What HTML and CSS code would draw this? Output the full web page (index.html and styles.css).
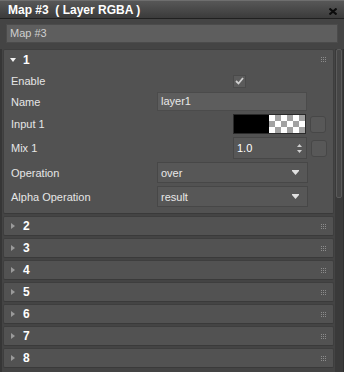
FILE: index.html
```html
<!DOCTYPE html>
<html lang="en">
<head>
    <meta charset="UTF-8">
    <meta name="viewport" content="width=device-width, initial-scale=1.0">
    <title>Map #3 (Layer RGBA)</title>
    <link rel="stylesheet" href="styles.css">
</head>
<body>

    <!-- Title bar -->
    <div class="titlebar">
        <span class="title">Map #3 &nbsp;( Layer RGBA )</span>
        <svg class="close" width="8" height="7" viewBox="0 0 8 7"><path d="M0.5,0.5 L7.5,6.5 M7.5,0.5 L0.5,6.5" stroke="#0c0c0c" stroke-width="2"/></svg>
    </div>

    <!-- Map name -->
    <div class="namebar">
        <div class="field">Map #3</div>
    </div>

    <div class="panel">
        <div class="rollouts">

            <!-- Layer 1, expanded -->
            <div class="rollout">
                <div class="rollout-head">
                    <svg class="tri" width="6" height="4" viewBox="0 0 6 4"><polygon points="0,0 6,0 3,4" fill="#f2f2f2"/></svg>
                    <span class="num">1</span>
                    <svg class="grip" width="5" height="5" viewBox="0 0 5 5" fill="#8c8c8c"><rect x="0" y="0" width="1" height="1"/><rect x="2" y="0" width="1" height="1"/><rect x="4" y="0" width="1" height="1"/><rect x="0" y="2" width="1" height="1"/><rect x="2" y="2" width="1" height="1"/><rect x="4" y="2" width="1" height="1"/><rect x="0" y="4" width="1" height="1"/><rect x="2" y="4" width="1" height="1"/><rect x="4" y="4" width="1" height="1"/></svg>
                </div>

                <div class="row row-enable">
                    <span class="label">Enable</span>
                    <span class="check offset">
                        <svg width="9" height="8" viewBox="0 0 9 8"><polyline points="1,4 3.5,6.5 8,1" fill="none" stroke="#cfcfcf" stroke-width="1.8"/></svg>
                    </span>
                </div>

                <div class="row row-name">
                    <span class="label">Name</span>
                    <div class="field name-field">layer1</div>
                </div>

                <div class="row row-input">
                    <span class="label">Input 1</span>
                    <div class="swatch offset">
                        <span class="swatch-black"></span>
                        <span class="swatch-checker"></span>
                    </div>
                    <span class="mini-btn"></span>
                </div>

                <div class="row row-mix">
                    <span class="label">Mix 1</span>
                    <div class="spinner offset">
                        <span>1.0</span>
                        <svg width="5" height="9" viewBox="0 0 5 9"><polygon points="2.5,0 5,3 0,3" fill="#cfcfcf"/><polygon points="0,6 5,6 2.5,9" fill="#cfcfcf"/></svg>
                    </div>
                    <span class="mini-btn"></span>
                </div>

                <div class="row row-drop">
                    <span class="label">Operation</span>
                    <div class="dropdown">
                        <span>over</span>
                        <svg width="7" height="5" viewBox="0 0 7 5"><rect x="0" y="0" width="7" height="1" fill="#e0e0e0"/><polygon points="0,1 7,1 3.5,5" fill="#e0e0e0"/></svg>
                    </div>
                </div>

                <div class="row row-drop">
                    <span class="label">Alpha Operation</span>
                    <div class="dropdown">
                        <span>result</span>
                        <svg width="7" height="5" viewBox="0 0 7 5"><rect x="0" y="0" width="7" height="1" fill="#e0e0e0"/><polygon points="0,1 7,1 3.5,5" fill="#e0e0e0"/></svg>
                    </div>
                </div>
            </div>

            <!-- Layers 2-8, collapsed -->
            <div class="rollout closed">
                <div class="rollout-head">
                    <svg class="tri" width="6" height="6" viewBox="0 0 4 6"><polygon points="0,0 4,3 0,6" fill="#9a9a9a"/></svg>
                    <span class="num">2</span>
                    <svg class="grip" width="5" height="5" viewBox="0 0 5 5" fill="#8c8c8c"><rect x="0" y="0" width="1" height="1"/><rect x="2" y="0" width="1" height="1"/><rect x="4" y="0" width="1" height="1"/><rect x="0" y="2" width="1" height="1"/><rect x="2" y="2" width="1" height="1"/><rect x="4" y="2" width="1" height="1"/><rect x="0" y="4" width="1" height="1"/><rect x="2" y="4" width="1" height="1"/><rect x="4" y="4" width="1" height="1"/></svg>
                </div>
            </div>
            <div class="rollout closed">
                <div class="rollout-head">
                    <svg class="tri" width="6" height="6" viewBox="0 0 4 6"><polygon points="0,0 4,3 0,6" fill="#9a9a9a"/></svg>
                    <span class="num">3</span>
                    <svg class="grip" width="5" height="5" viewBox="0 0 5 5" fill="#8c8c8c"><rect x="0" y="0" width="1" height="1"/><rect x="2" y="0" width="1" height="1"/><rect x="4" y="0" width="1" height="1"/><rect x="0" y="2" width="1" height="1"/><rect x="2" y="2" width="1" height="1"/><rect x="4" y="2" width="1" height="1"/><rect x="0" y="4" width="1" height="1"/><rect x="2" y="4" width="1" height="1"/><rect x="4" y="4" width="1" height="1"/></svg>
                </div>
            </div>
            <div class="rollout closed">
                <div class="rollout-head">
                    <svg class="tri" width="6" height="6" viewBox="0 0 4 6"><polygon points="0,0 4,3 0,6" fill="#9a9a9a"/></svg>
                    <span class="num">4</span>
                    <svg class="grip" width="5" height="5" viewBox="0 0 5 5" fill="#8c8c8c"><rect x="0" y="0" width="1" height="1"/><rect x="2" y="0" width="1" height="1"/><rect x="4" y="0" width="1" height="1"/><rect x="0" y="2" width="1" height="1"/><rect x="2" y="2" width="1" height="1"/><rect x="4" y="2" width="1" height="1"/><rect x="0" y="4" width="1" height="1"/><rect x="2" y="4" width="1" height="1"/><rect x="4" y="4" width="1" height="1"/></svg>
                </div>
            </div>
            <div class="rollout closed">
                <div class="rollout-head">
                    <svg class="tri" width="6" height="6" viewBox="0 0 4 6"><polygon points="0,0 4,3 0,6" fill="#9a9a9a"/></svg>
                    <span class="num">5</span>
                    <svg class="grip" width="5" height="5" viewBox="0 0 5 5" fill="#8c8c8c"><rect x="0" y="0" width="1" height="1"/><rect x="2" y="0" width="1" height="1"/><rect x="4" y="0" width="1" height="1"/><rect x="0" y="2" width="1" height="1"/><rect x="2" y="2" width="1" height="1"/><rect x="4" y="2" width="1" height="1"/><rect x="0" y="4" width="1" height="1"/><rect x="2" y="4" width="1" height="1"/><rect x="4" y="4" width="1" height="1"/></svg>
                </div>
            </div>
            <div class="rollout closed">
                <div class="rollout-head">
                    <svg class="tri" width="6" height="6" viewBox="0 0 4 6"><polygon points="0,0 4,3 0,6" fill="#9a9a9a"/></svg>
                    <span class="num">6</span>
                    <svg class="grip" width="5" height="5" viewBox="0 0 5 5" fill="#8c8c8c"><rect x="0" y="0" width="1" height="1"/><rect x="2" y="0" width="1" height="1"/><rect x="4" y="0" width="1" height="1"/><rect x="0" y="2" width="1" height="1"/><rect x="2" y="2" width="1" height="1"/><rect x="4" y="2" width="1" height="1"/><rect x="0" y="4" width="1" height="1"/><rect x="2" y="4" width="1" height="1"/><rect x="4" y="4" width="1" height="1"/></svg>
                </div>
            </div>
            <div class="rollout closed">
                <div class="rollout-head">
                    <svg class="tri" width="6" height="6" viewBox="0 0 4 6"><polygon points="0,0 4,3 0,6" fill="#9a9a9a"/></svg>
                    <span class="num">7</span>
                    <svg class="grip" width="5" height="5" viewBox="0 0 5 5" fill="#8c8c8c"><rect x="0" y="0" width="1" height="1"/><rect x="2" y="0" width="1" height="1"/><rect x="4" y="0" width="1" height="1"/><rect x="0" y="2" width="1" height="1"/><rect x="2" y="2" width="1" height="1"/><rect x="4" y="2" width="1" height="1"/><rect x="0" y="4" width="1" height="1"/><rect x="2" y="4" width="1" height="1"/><rect x="4" y="4" width="1" height="1"/></svg>
                </div>
            </div>
            <div class="rollout closed">
                <div class="rollout-head">
                    <svg class="tri" width="6" height="6" viewBox="0 0 4 6"><polygon points="0,0 4,3 0,6" fill="#9a9a9a"/></svg>
                    <span class="num">8</span>
                    <svg class="grip" width="5" height="5" viewBox="0 0 5 5" fill="#8c8c8c"><rect x="0" y="0" width="1" height="1"/><rect x="2" y="0" width="1" height="1"/><rect x="4" y="0" width="1" height="1"/><rect x="0" y="2" width="1" height="1"/><rect x="2" y="2" width="1" height="1"/><rect x="4" y="2" width="1" height="1"/><rect x="0" y="4" width="1" height="1"/><rect x="2" y="4" width="1" height="1"/><rect x="4" y="4" width="1" height="1"/></svg>
                </div>
            </div>
        </div>

        <!-- Scrollbar -->
        <div class="scroll">
            <div class="thumb"></div>
        </div>
    </div>

</body>
</html>
```

FILE: styles.css
```css
body {
    margin: 0;
    width: 344px;
    height: 372px;
    overflow: hidden;
    background-color: #444444;
    font-family: "Liberation Sans", Arial, sans-serif;
    font-size: 11px;
    color: #e4e4e4;
}

/* Title bar */
.titlebar {
    height: 17px;
    border-top: 1px solid #6e6e6e;
    border-bottom: 1px solid #202020;
    background: linear-gradient(#575757, #3b3b3b);
    display: flex;
    align-items: center;
    justify-content: space-between;
    padding: 0 7px 0 8px;
}
.title {
    font-size: 12px;
    font-weight: bold;
    color: #ffffff;
}
.close {
    margin-top: 4px;
}

/* Name bar */
.namebar {
    padding: 5px 6px 6px 6px;
}
.field {
    height: 17px;
    line-height: 17px;
    padding: 0 3px;
    background-color: #5e5e5e;
    border: 1px solid #4b4b4b;
    color: #cfcfcf;
}

/* Panel with rollouts and scrollbar */
.panel {
    display: flex;
    height: 323px;
    border-left: 2px solid #363636;
}
.rollouts {
    width: 331px;
    margin-left: 1px;
    display: flex;
    flex-direction: column;
    gap: 2px;
}
.rollout {
    background-color: #525252;
    border: 1px solid #3e3e3e;
    border-bottom-color: #3a3a3a;
    border-radius: 2px;
    padding-bottom: 6px;
}
.rollout.closed {
    padding-bottom: 0;
}
.rollout-head {
    height: 19px;
    display: flex;
    align-items: center;
    padding: 0 7px 0 6px;
}
.rollout.closed .rollout-head {
    height: 18px;
}
.tri {
    width: 6px;
    margin-right: 7px;
}
.num {
    font-size: 12px;
    font-weight: bold;
    color: #ffffff;
    flex: 1;
}

/* Parameter rows */
.row {
    display: flex;
    align-items: center;
    margin-top: 3px;
    padding-left: 7px;
}
.label {
    width: 146px;
    flex: none;
    color: #e6e6e6;
}
.offset {
    margin-left: 76px;
}
.row-enable {
    height: 18px;
}
.row-name {
    height: 19px;
    margin-top: 2px;
}
.row-input {
    height: 20px;
}
.row-mix {
    height: 22px;
}
.row-drop {
    height: 21px;
}

.check {
    width: 11px;
    height: 11px;
    background-color: #5b5b5b;
    border: 1px solid #4a4a4a;
    display: flex;
    align-items: center;
    justify-content: center;
}
.name-field {
    width: 142px;
    background-color: #5d5d5d;
    color: #e8e8e8;
}
.swatch {
    width: 71px;
    height: 18px;
    border: 1px solid #2a2a2a;
    display: flex;
}
.swatch-black {
    width: 35px;
    background-color: #000000;
}
.swatch-checker {
    flex: 1;
    background: conic-gradient(#a2a2a2 25%, #ffffff 0 50%, #a2a2a2 0 75%, #ffffff 0) 0 0 / 12px 12px;
}
.mini-btn {
    width: 14px;
    height: 15px;
    margin-left: 4px;
    background-color: #585858;
    border: 1px solid #474747;
    border-radius: 3px;
}
.spinner {
    width: 65px;
    height: 20px;
    padding: 0 4px 0 3px;
    background-color: #575757;
    border: 1px solid #474747;
    display: flex;
    align-items: center;
    justify-content: space-between;
    color: #ffffff;
}
.dropdown {
    width: 138px;
    height: 19px;
    padding: 0 8px 0 3px;
    background-color: #575757;
    border: 1px solid #474747;
    display: flex;
    align-items: center;
    justify-content: space-between;
    color: #e8e8e8;
}

/* Scrollbar */
.scroll {
    width: 8px;
    margin-left: 1px;
    background-color: #3a3a3a;
    border-right: 1px solid #303030;
}
.thumb {
    width: 4px;
    height: 147px;
    margin: 0 0 0 1px;
    background-color: #464646;
    border: 1px solid #5a5a5a;
    border-radius: 2px;
}
```
